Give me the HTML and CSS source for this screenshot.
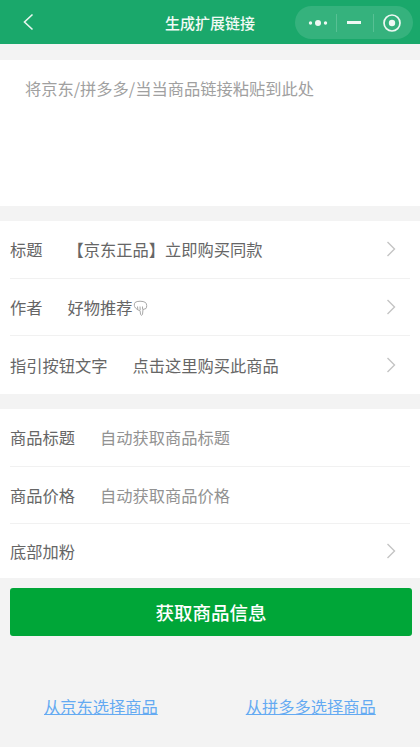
FILE: index.html
```html
<!DOCTYPE html>
<html lang="zh-CN">
<head>
    <meta charset="UTF-8">
    <meta name="viewport" content="width=device-width, initial-scale=1.0">
    <title>生成扩展链接</title>
    <link rel="stylesheet" href="styles.css">
</head>
<body>
    <div class="navbar">
        <svg class="nav-back" width="12" height="18" viewBox="0 0 12 18"><path d="M10.5 1.5 L2.5 9 L10.5 16.5" fill="none" stroke="#e8f6ef" stroke-width="1.6"/></svg>
        <div class="nav-title">生成扩展链接</div>
        <div class="capsule">
            <svg class="capsule-dots" width="20" height="8" viewBox="0 0 20 8"><circle cx="2.5" cy="4" r="1.7" fill="#eef8f3"/><circle cx="10" cy="4" r="3" fill="#eef8f3"/><circle cx="17.5" cy="4" r="1.7" fill="#eef8f3"/></svg>
            <span class="capsule-line"></span>
            <span class="capsule-minus"></span>
            <span class="capsule-line"></span>
            <svg class="capsule-target" width="18" height="18" viewBox="0 0 18 18"><circle cx="9" cy="9" r="8" fill="none" stroke="#eef8f3" stroke-width="1.7"/><circle cx="9" cy="9" r="3.2" fill="#eef8f3"/></svg>
        </div>
    </div>

    <div class="paste-box">将京东/拼多多/当当商品链接粘贴到此处</div>

    <div class="group">
        <div class="row">
            <span class="row-label">标题</span>
            <span class="row-value row-value-title">【京东正品】立即购买同款</span>
            <svg class="arrow" width="10" height="16" viewBox="0 0 10 16"><path d="M1.5 1 L8.5 8 L1.5 15" fill="none" stroke="#c4c4c4" stroke-width="1.4"/></svg>
        </div>
        <div class="row">
            <span class="row-label">作者</span>
            <span class="row-value row-value-author">好物推荐</span>
            <svg class="hand" width="15" height="16" viewBox="0 0 15 16"><path d="M2 2.5 C4 .8 10 .8 12.5 2.5 C14 4 14 7 13 8.5 L10 9.5 L9.5 14.5 C9 15.5 8 15.5 7.6 14.5 L7 10.5 L5 10 L2.5 8 C1 6.5 1 4 2 2.5 Z M4.5 6.5 L4.8 9.5 M7 6.5 L7.2 10 M9.5 6.5 L9.6 9.5" fill="#fff" stroke="#a8a8a8" stroke-width="1"/></svg>
            <svg class="arrow" width="10" height="16" viewBox="0 0 10 16"><path d="M1.5 1 L8.5 8 L1.5 15" fill="none" stroke="#c4c4c4" stroke-width="1.4"/></svg>
        </div>
        <div class="row row-last">
            <span class="row-label">指引按钮文字</span>
            <span class="row-value row-value-btn">点击这里购买此商品</span>
            <svg class="arrow" width="10" height="16" viewBox="0 0 10 16"><path d="M1.5 1 L8.5 8 L1.5 15" fill="none" stroke="#c4c4c4" stroke-width="1.4"/></svg>
        </div>
    </div>

    <div class="group">
        <div class="row">
            <span class="row-label">商品标题</span>
            <span class="row-hint">自动获取商品标题</span>
        </div>
        <div class="row">
            <span class="row-label">商品价格</span>
            <span class="row-hint">自动获取商品价格</span>
        </div>
        <div class="row row-last row-short">
            <span class="row-label">底部加粉</span>
            <svg class="arrow" width="10" height="16" viewBox="0 0 10 16"><path d="M1.5 1 L8.5 8 L1.5 15" fill="none" stroke="#c4c4c4" stroke-width="1.4"/></svg>
        </div>
    </div>

    <div class="fetch-btn">获取商品信息</div>

    <div class="links">
        <a class="link link-jd">从京东选择商品</a>
        <a class="link link-pdd">从拼多多选择商品</a>
    </div>
</body>
</html>
```

FILE: styles.css
```css
body {
    margin: 0;
    height: 747px;
    overflow: hidden;
    background-color: #f3f3f3;
    font-family: "Noto Sans CJK SC", "Noto Sans", sans-serif;
    font-size: 16.25px;
    color: #666;
}
.navbar {
    height: 44px;
    display: flex;
    align-items: center;
    position: relative;
    background-color: #1aa86b;
}
.nav-back {
    margin-left: 22px;
}
.nav-title {
    position: absolute;
    left: 0;
    right: 0;
    text-align: center;
    color: #f2faf6;
    font-size: 15px;
    font-weight: 500;
}
.capsule {
    position: absolute;
    right: 7px;
    top: 6px;
    width: 118px;
    height: 33px;
    box-sizing: border-box;
    padding-left: 13px;
    border-radius: 17px;
    background-color: #35b27d;
    display: flex;
    align-items: center;
}
.capsule-line {
    width: 1px;
    height: 18px;
    background-color: #58c094;
}
.capsule-dots {
    margin-right: 8px;
}
.capsule-minus {
    width: 14px;
    height: 3px;
    margin: 0 12px 0 10px;
    background-color: #eef8f3;
}
.capsule-target {
    margin-left: 9px;
}
.paste-box {
    margin-top: 16px;
    height: 146px;
    box-sizing: border-box;
    padding: 16px 25px;
    background: white;
    color: #a0a0a0;
    line-height: 24px;
}
.group {
    margin-top: 15px;
    padding: 0 10px;
    background: white;
}
.row {
    height: 57.7px;
    box-sizing: border-box;
    display: flex;
    align-items: center;
    border-bottom: 1px solid #f1f1f1;
}
.row-last {
    border-bottom: none;
}
.row-short {
    height: 54px;
}
.row-label {
    color: #666;
}
.row-value {
    color: #666;
}
.row-value-title {
    margin-left: 25px;
}
.row-value-author {
    margin-left: 25px;
}
.row-value-btn {
    margin-left: 25px;
}
.row-hint {
    margin-left: 25px;
    color: #929292;
}
.hand {
    margin-top: 2px;
}
.arrow {
    margin-left: auto;
    margin-right: 14px;
}
.fetch-btn {
    margin: 10px 8px 0 10px;
    height: 48px;
    line-height: 48px;
    border-radius: 3px;
    background-color: #00a638;
    color: white;
    font-size: 18.5px;
    font-weight: 500;
    text-align: center;
}
.links {
    display: flex;
    margin-top: 58px;
    padding-left: 44px;
    line-height: 24px;
}
.link {
    color: #64aaf2;
    text-decoration: underline;
}
.link-pdd {
    margin-left: 88px;
}
```
